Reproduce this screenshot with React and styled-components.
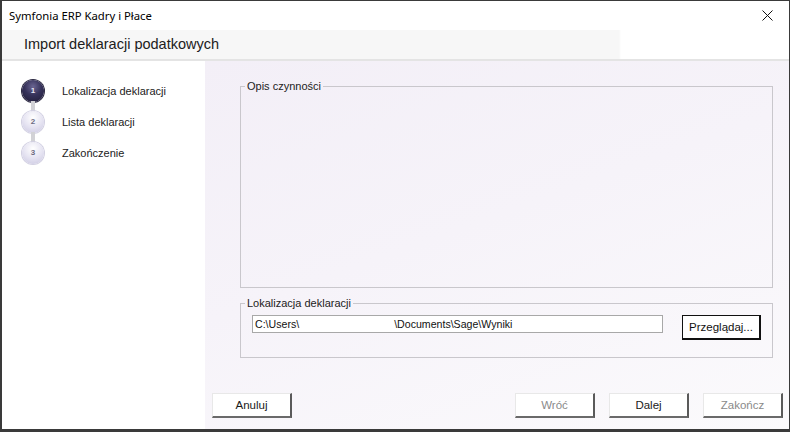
import styled, { createGlobalStyle } from "styled-components";

const GlobalStyle = createGlobalStyle`
  html, body {
    margin: 0;
    padding: 0;
    background: #ffffff;
  }
  * {
    box-sizing: border-box;
  }
`;

const steps = [
  { n: 1, label: "Lokalizacja deklaracji", active: true },
  { n: 2, label: "Lista deklaracji" },
  { n: 3, label: "Zakończenie" },
];

export default function App() {
  return (
    <>
      <GlobalStyle />
      <Window>
        <TitleBar>
          <span>Symfonia ERP Kadry i Płace</span>
          <CloseButton aria-label="Zamknij">
            <svg width="11" height="11" viewBox="0 0 11 11">
              <path d="M0.5 0.5 L10.5 10.5 M10.5 0.5 L0.5 10.5" stroke="#111" strokeWidth="1" />
            </svg>
          </CloseButton>
        </TitleBar>
        <Header>
          <h1>Import deklaracji podatkowych</h1>
        </Header>
        <Body>
          <Sidebar>
            {steps.map((step, index) => (
              <Step key={step.n}>
                <Bullet active={step.active} last={index === steps.length - 1}>
                  {step.n}
                </Bullet>
                <p>{step.label}</p>
              </Step>
            ))}
          </Sidebar>
          <Main>
            <Groups>
              <GroupBox height={208}>
                <legend>Opis czynności</legend>
              </GroupBox>
              <GroupBox height={61}>
                <legend>Lokalizacja deklaracji</legend>
                <PathRow>
                  <PathInput>
                    <span>C:\Users\</span>
                    <span className="rest">\Documents\Sage\Wyniki</span>
                  </PathInput>
                  <BrowseButton>Przeglądaj...</BrowseButton>
                </PathRow>
              </GroupBox>
            </Groups>
            <ButtonBar>
              <WizardButton>Anuluj</WizardButton>
              <RightButtons>
                <WizardButton disabled>Wróć</WizardButton>
                <WizardButton>Dalej</WizardButton>
                <WizardButton disabled>Zakończ</WizardButton>
              </RightButtons>
            </ButtonBar>
          </Main>
        </Body>
      </Window>
    </>
  );
}

const Window = styled.div`
  width: 790px;
  height: 432px;
  display: flex;
  flex-direction: column;
  border: 1px solid #3a3a3a;
  border-left-width: 2px;
  border-bottom-width: 3px;
  background: #ffffff;
  font-family: "Liberation Sans", Arial, sans-serif;
  color: #1e1e1e;
  overflow: hidden;
`;

const TitleBar = styled.div`
  height: 29px;
  flex: none;
  display: flex;
  align-items: center;
  justify-content: space-between;
  padding-left: 7px;
  padding-bottom: 1px;
  font-family: "Noto Sans", "Open Sans", sans-serif;
  font-size: 11.3px;
  color: #000;
  background: #ffffff;
`;

const CloseButton = styled.div`
  width: 46px;
  height: 29px;
  display: flex;
  align-items: center;
  justify-content: center;
  padding-left: 2px;
`;

const Header = styled.div`
  height: 31px;
  flex: none;
  display: flex;
  align-items: center;
  padding-left: 22px;
  padding-bottom: 2px;
  background: linear-gradient(to right, #f7f7f7 0, #f7f7f7 617px, #ffffff 619px);
  border-bottom: 2px solid #e4e4e4;

  h1 {
    margin: 0;
    font-size: 14.5px;
    font-weight: 400;
    color: #202020;
  }
`;

const Body = styled.div`
  flex: 1;
  display: flex;
  min-height: 0;
`;

const Sidebar = styled.div`
  width: 203px;
  flex: none;
  background: #ffffff;
  padding: 14px 0 0 20px;
  display: flex;
  flex-direction: column;
`;

const Step = styled.div`
  display: flex;
  align-items: center;
  height: 31px;

  p {
    margin: 0 0 0 18px;
    font-size: 11px;
    color: #222;
  }
`;

const Bullet = styled.div`
  position: relative;
  width: 22px;
  height: 22px;
  border-radius: 50%;
  display: flex;
  align-items: center;
  justify-content: center;
  font-size: 8px;
  font-weight: 700;
  color: ${(p) => (p.active ? "#e8e6f4" : "#6d6b82")};
  background: ${(p) =>
    p.active
      ? "radial-gradient(circle at 50% 30%, #6a6592 0%, #36325a 45%, #1e1b35 100%)"
      : "radial-gradient(circle at 50% 30%, #ffffff 0%, #e6e4f2 50%, #c9c6e0 100%)"};
  box-shadow: ${(p) => (p.active ? "0 0 0 1px #2a2740" : "0 0 0 1px #d2d0e2")};
  z-index: 1;

  &::after {
    content: "";
    display: ${(p) => (p.last ? "none" : "block")};
    position: absolute;
    left: 9px;
    top: 21px;
    width: 4px;
    height: 11px;
    background: #d2d2d6;
    z-index: -1;
  }
`;

const Main = styled.div`
  flex: 1;
  display: flex;
  flex-direction: column;
  padding: 19px 6px 11px 7px;
  background: linear-gradient(160deg, #f3eff7 0%, #f6f3f9 45%, #fbfafc 100%);
`;

const Groups = styled.div`
  display: flex;
  flex-direction: column;
  gap: 9px;
  margin: 0 10px 0 28px;
`;

const GroupBox = styled.fieldset`
  height: ${(p) => p.height}px;
  margin: 0;
  padding: 0;
  border: 1px solid #c9c7cc;
  border-radius: 0;

  legend {
    margin-left: 4px;
    padding: 0 2px;
    font-size: 11px;
    color: #222;
  }
`;

const PathRow = styled.div`
  display: flex;
  align-items: flex-start;
  gap: 19px;
  margin: 6px 0 0 11px;
`;

const PathInput = styled.div`
  width: 411px;
  height: 18px;
  display: flex;
  align-items: center;
  padding-left: 2px;
  background: #ffffff;
  border: 1px solid #a8a8a8;
  font-size: 10.6px;
  color: #111;

  .rest {
    margin-left: 95px;
  }
`;

const BrowseButton = styled.div`
  width: 79px;
  height: 25px;
  display: flex;
  align-items: center;
  justify-content: center;
  background: #ffffff;
  border: 1px solid #111;
  border-right-width: 2px;
  border-bottom-width: 2px;
  font-size: 11.5px;
  color: #111;
`;

const ButtonBar = styled.div`
  margin-top: auto;
  display: flex;
  justify-content: space-between;
  align-items: center;
`;

const RightButtons = styled.div`
  display: flex;
  gap: 14px;
`;

const WizardButton = styled.div`
  width: 80px;
  height: 25px;
  display: flex;
  align-items: center;
  justify-content: center;
  background: #ffffff;
  border-top: 1px solid #e8e8e8;
  border-left: 1px solid #e8e8e8;
  border-right: 2px solid #5a5a5a;
  border-bottom: 2px solid #6a6a6a;
  font-size: 11.5px;
  color: ${(p) => (p.disabled ? "#8a8a8a" : "#1a1a1a")};
`;
